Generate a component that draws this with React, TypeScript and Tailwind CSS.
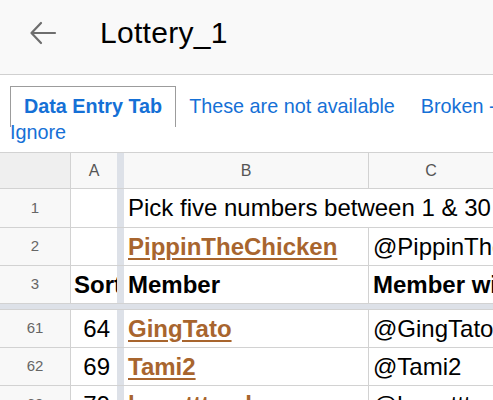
import React from "react";

const font = { fontFamily: '"Liberation Sans", Arial, Helvetica, sans-serif' };

function RowNum({ n, h }: { n: string; h: string }) {
  return (
    <div className={`w-[71px] shrink-0 ${h} border-r border-b border-[#d2d2d2] bg-[#f8f8f8] flex items-center justify-center text-[15px] text-[#666]`}>
      {n}
    </div>
  );
}

function Bar({ h }: { h: string }) {
  return <div className={`w-[7px] shrink-0 ${h} bg-[#dde1e8] border-b border-[#d2d2d2]`} />;
}

const link = "font-bold text-[#a8652e] underline decoration-2 underline-offset-[3px]";

function DataRow({
  n,
  a,
  b,
  c,
  h = "h-[38px]",
  aBold = false,
  aRight = false,
  bClass = "",
  cClass = "",
}: {
  n: string;
  a?: string;
  b?: string;
  c?: string;
  h?: string;
  aBold?: boolean;
  aRight?: boolean;
  bClass?: string;
  cClass?: string;
}) {
  return (
    <div className="flex">
      <RowNum n={n} h={h} />
      <div
        className={`w-[46px] shrink-0 ${h} border-b border-[#d2d2d2] bg-white flex items-center overflow-hidden whitespace-nowrap text-[24px] text-black ${
          aRight ? "justify-end pr-[7px]" : "pl-[3px]"
        } ${aBold ? "font-bold" : ""}`}
      >
        {a}
      </div>
      <Bar h={h} />
      <div className={`w-[245px] shrink-0 ${h} border-r border-b border-[#d2d2d2] bg-white flex items-center pl-[4px] overflow-hidden whitespace-nowrap text-[24px] text-black`}>
        <span className={bClass}>{b}</span>
      </div>
      <div className={`flex-1 ${h} border-b border-[#d2d2d2] bg-white flex items-center pl-[4px] overflow-hidden whitespace-nowrap text-[24px] text-black`}>
        <span className={cClass}>{c}</span>
      </div>
    </div>
  );
}

export default function App() {
  return (
    <div className="w-[493px] h-[400px] overflow-hidden bg-white" style={font}>
      {/* Header */}
      <div className="h-[75px] bg-[#f9f9f9] border-b border-[#d0d0d0] flex items-center pb-[8px]">
        <svg width="28" height="24" viewBox="0 0 28 24" className="ml-[29px]" fill="none" stroke="#6e6e6e" strokeWidth="2.2" strokeLinecap="round" strokeLinejoin="round">
          <path d="M26 12H3" />
          <path d="M12 2L2.5 12L12 22" />
        </svg>
        <div className="ml-[43px] text-[30px] text-black leading-none tracking-[0.3px]">Lottery_1</div>
      </div>

      {/* Tabs */}
      <div className="h-[77px] bg-white pt-[11px] overflow-hidden">
        <div className="flex whitespace-nowrap text-[19.8px] text-[#1570d6]">
          <div className="ml-[10px] h-[41px] px-[13px] border-[1.5px] border-b-0 border-[#9c9c9c] flex items-center font-bold">
            Data Entry Tab
          </div>
          <div className="h-[41px] px-[13px] flex items-center">These are not available</div>
          <div className="h-[41px] px-[13px] flex items-center">Broken -</div>
        </div>
        <div className="mt-[-7px] pl-[10px] text-[19.8px] leading-[24px] text-[#1570d6]">Ignore</div>
      </div>

      {/* Grid */}
      <div className="border-t border-[#d2d2d2]">
        {/* column headers */}
        <div className="flex">
          <div className="w-[71px] shrink-0 h-[36px] border-r border-b border-[#d2d2d2] bg-[#efefef]" />
          <div className="w-[46px] shrink-0 h-[36px] border-b border-[#d2d2d2] bg-[#f8f8f8] flex items-center justify-center text-[16px] text-[#555]">
            A
          </div>
          <Bar h="h-[36px]" />
          <div className="w-[245px] shrink-0 h-[36px] border-r border-b border-[#d2d2d2] bg-[#f8f8f8] flex items-center justify-center text-[16px] text-[#555]">
            B
          </div>
          <div className="flex-1 h-[36px] border-b border-[#d2d2d2] bg-[#f8f8f8] flex items-center justify-center text-[16px] text-[#555]">
            C
          </div>
        </div>

        {/* row 1 */}
        <div className="flex">
          <RowNum n="1" h="h-[39px]" />
          <div className="w-[46px] shrink-0 h-[39px] border-b border-[#d2d2d2] bg-white" />
          <Bar h="h-[39px]" />
          <div className="flex-1 h-[39px] border-b border-[#d2d2d2] bg-white flex items-center pl-[4px] whitespace-nowrap overflow-hidden text-[24px] text-black">
            Pick five numbers between 1 &amp; 30
          </div>
        </div>

        <DataRow n="2" b="PippinTheChicken" bClass={link} c="@PippinTheChicken" />
        <DataRow n="3" a="Sort" aBold b="Member" bClass="font-bold" c="Member with @" cClass="font-bold" />

        {/* freeze bar */}
        <div className="h-[6px] bg-[#dde1e8] border-b border-[#d2d2d2]" />

        <DataRow n="61" a="64" aRight b="GingTato" bClass={link} c="@GingTato" />
        <DataRow n="62" a="69" aRight b="Tami2" bClass={link} c="@Tami2" />
        <DataRow n="63" a="79" aRight b="lauretttoad" bClass={link} c="@lauretttoad" />
      </div>
    </div>
  );
}
